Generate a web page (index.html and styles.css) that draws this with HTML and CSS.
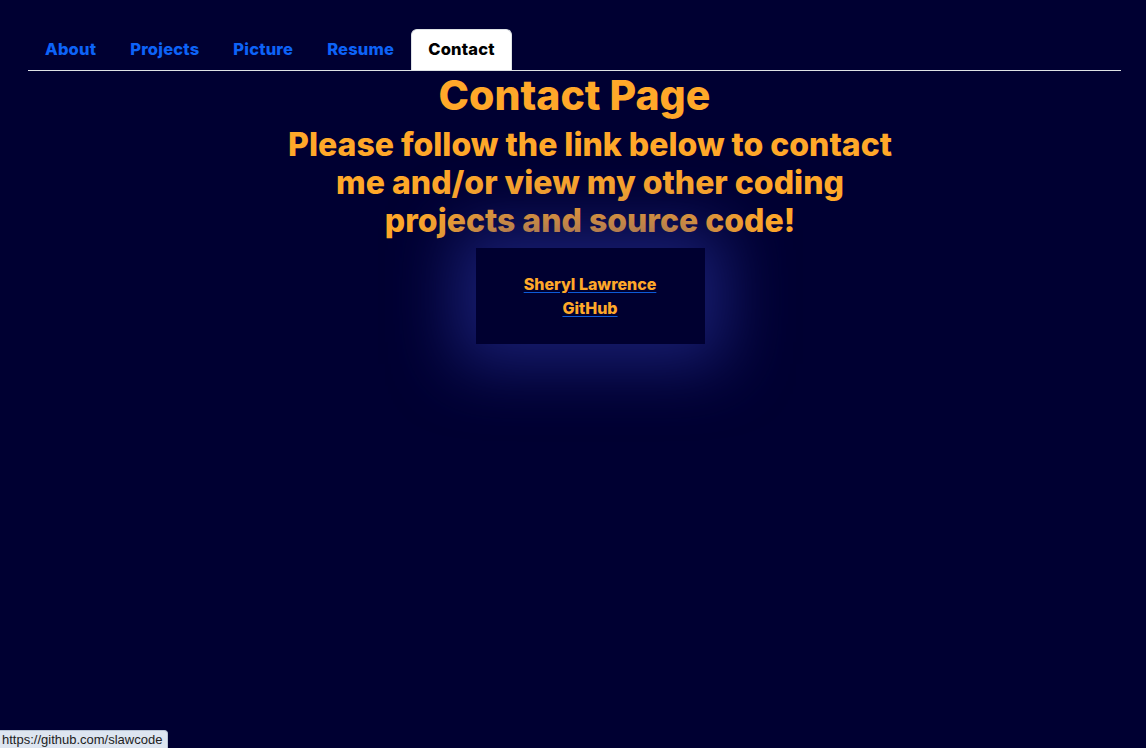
FILE: index.html
```html
<!DOCTYPE html>
<html lang="en">
<head>
<meta charset="utf-8">
<title>Contact</title>
<link rel="stylesheet" href="styles.css">
</head>
<body>
<nav class="tabs">
  <ul class="tab-list">
    <li><a class="tab-link" href="#">About</a></li>
    <li><a class="tab-link" href="#">Projects</a></li>
    <li><a class="tab-link" href="#">Picture</a></li>
    <li><a class="tab-link" href="#">Resume</a></li>
    <li><a class="tab-link active" href="#">Contact</a></li>
  </ul>
</nav>
<main class="page">
  <h1 class="title">Contact Page</h1>
  <div class="content">
    <h2 class="subtitle">Please follow the link below to contact me and/or view my other coding projects and source code!</h2>
    <div class="card">
      <a class="card-link" href="#"><span class="card-text">Sheryl Lawrence GitHub</span></a>
    </div>
  </div>
</main>
<div class="status">https://github.com/slawcode</div>
</body>
</html>
```
FILE: styles.css
```css
html, body {
  margin: 0;
  padding: 0;
  background: #000032;
  min-height: 100%;
}
body {
  font-family: "Inter", "Roboto", sans-serif;
  height: 748px;
  overflow: hidden;
}
.tabs {
  padding: 29px 25px 0 28px;
}
.tab-list {
  list-style: none;
  margin: 0;
  padding: 0;
  display: flex;
  border-bottom: 1px solid #dee2e6;
}
.tab-link {
  display: block;
  padding: 7px 16px 9px;
  line-height: 24px;
  font-size: 16.5px;
  font-weight: 800;
  color: #0d63f8;
  text-decoration: none;
  border: 1px solid transparent;
  border-bottom: 0;
  border-radius: 6px 6px 0 0;
  letter-spacing: 0.2px;
}
.tab-link.active {
  background: #ffffff;
  color: #000000;
  border-color: #dee2e6;
}
.page {
  text-align: center;
}
.title {
  margin: 0 25px 0 28px;
  font-size: 41px;
  line-height: 48px;
  font-weight: 800;
  color: #ffa829;
}
.content {
  width: 640px;
  margin: 0 auto 0 270px;
  display: flex;
  flex-direction: column;
  align-items: center;
}
.subtitle {
  width: 624px;
  margin: 7px 0 7px;
  font-size: 32px;
  line-height: 38px;
  font-weight: 800;
  color: #ffa829;
}
.card {
  width: 149px;
  padding: 24px 40px;
  margin-top: 1px;
  background: #000030;
  box-shadow: 0 0 65px 20px rgba(38, 48, 150, 0.65);
}
.card-link {
  font-size: 16px;
  line-height: 24px;
  font-weight: 800;
  color: #ffa829;
  text-decoration: underline;
  text-decoration-color: #0d5ad8;
  text-underline-offset: 2px;
}
.status {
  position: fixed;
  left: 0;
  bottom: 0;
  padding: 2px 5px 1px 2px;
  background: #dde5f0;
  border: 1px solid #b9c4d4;
  border-left: 0;
  border-bottom: 0;
  border-top-right-radius: 4px;
  font-family: "Liberation Sans", sans-serif;
  font-size: 13px;
  line-height: 14px;
  color: #222;
}
```
